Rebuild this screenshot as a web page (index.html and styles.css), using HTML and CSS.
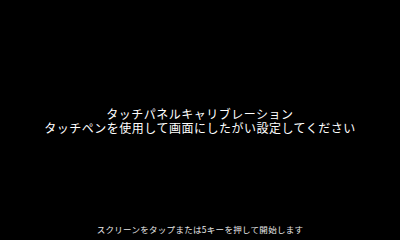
FILE: index.html
```html
<!DOCTYPE html>
<html lang="ja">
<head>
<meta charset="utf-8">
<link rel="stylesheet" href="styles.css">
</head>
<body>
<div class="screen">
  <div class="main">
    <p class="message">タッチパネルキャリブレーション<br>タッチペンを使用して画面にしたがい設定してください</p>
  </div>
  <p class="footer">スクリーンをタップまたは5キーを押して開始します</p>
</div>
</body>
</html>
```
FILE: styles.css
```css
html, body {
  margin: 0;
  padding: 0;
  background: #000;
}
.screen {
  width: 400px;
  height: 240px;
  display: flex;
  flex-direction: column;
  font-family: "Noto Sans CJK JP", "Noto Sans", sans-serif;
  color: #fff;
}
.main {
  flex: 1;
  display: flex;
  flex-direction: column;
  justify-content: center;
  align-items: center;
  padding-top: 18px;
}
.message {
  margin: 0;
  text-align: center;
  font-size: 12px;
  letter-spacing: 0.5px;
  line-height: 14px;
}
.footer {
  margin: 0;
  padding-bottom: 5px;
  text-align: center;
  font-size: 8.5px;
  letter-spacing: 0.3px;
  line-height: 12px;
  color: #e8e8e8;
}
```
